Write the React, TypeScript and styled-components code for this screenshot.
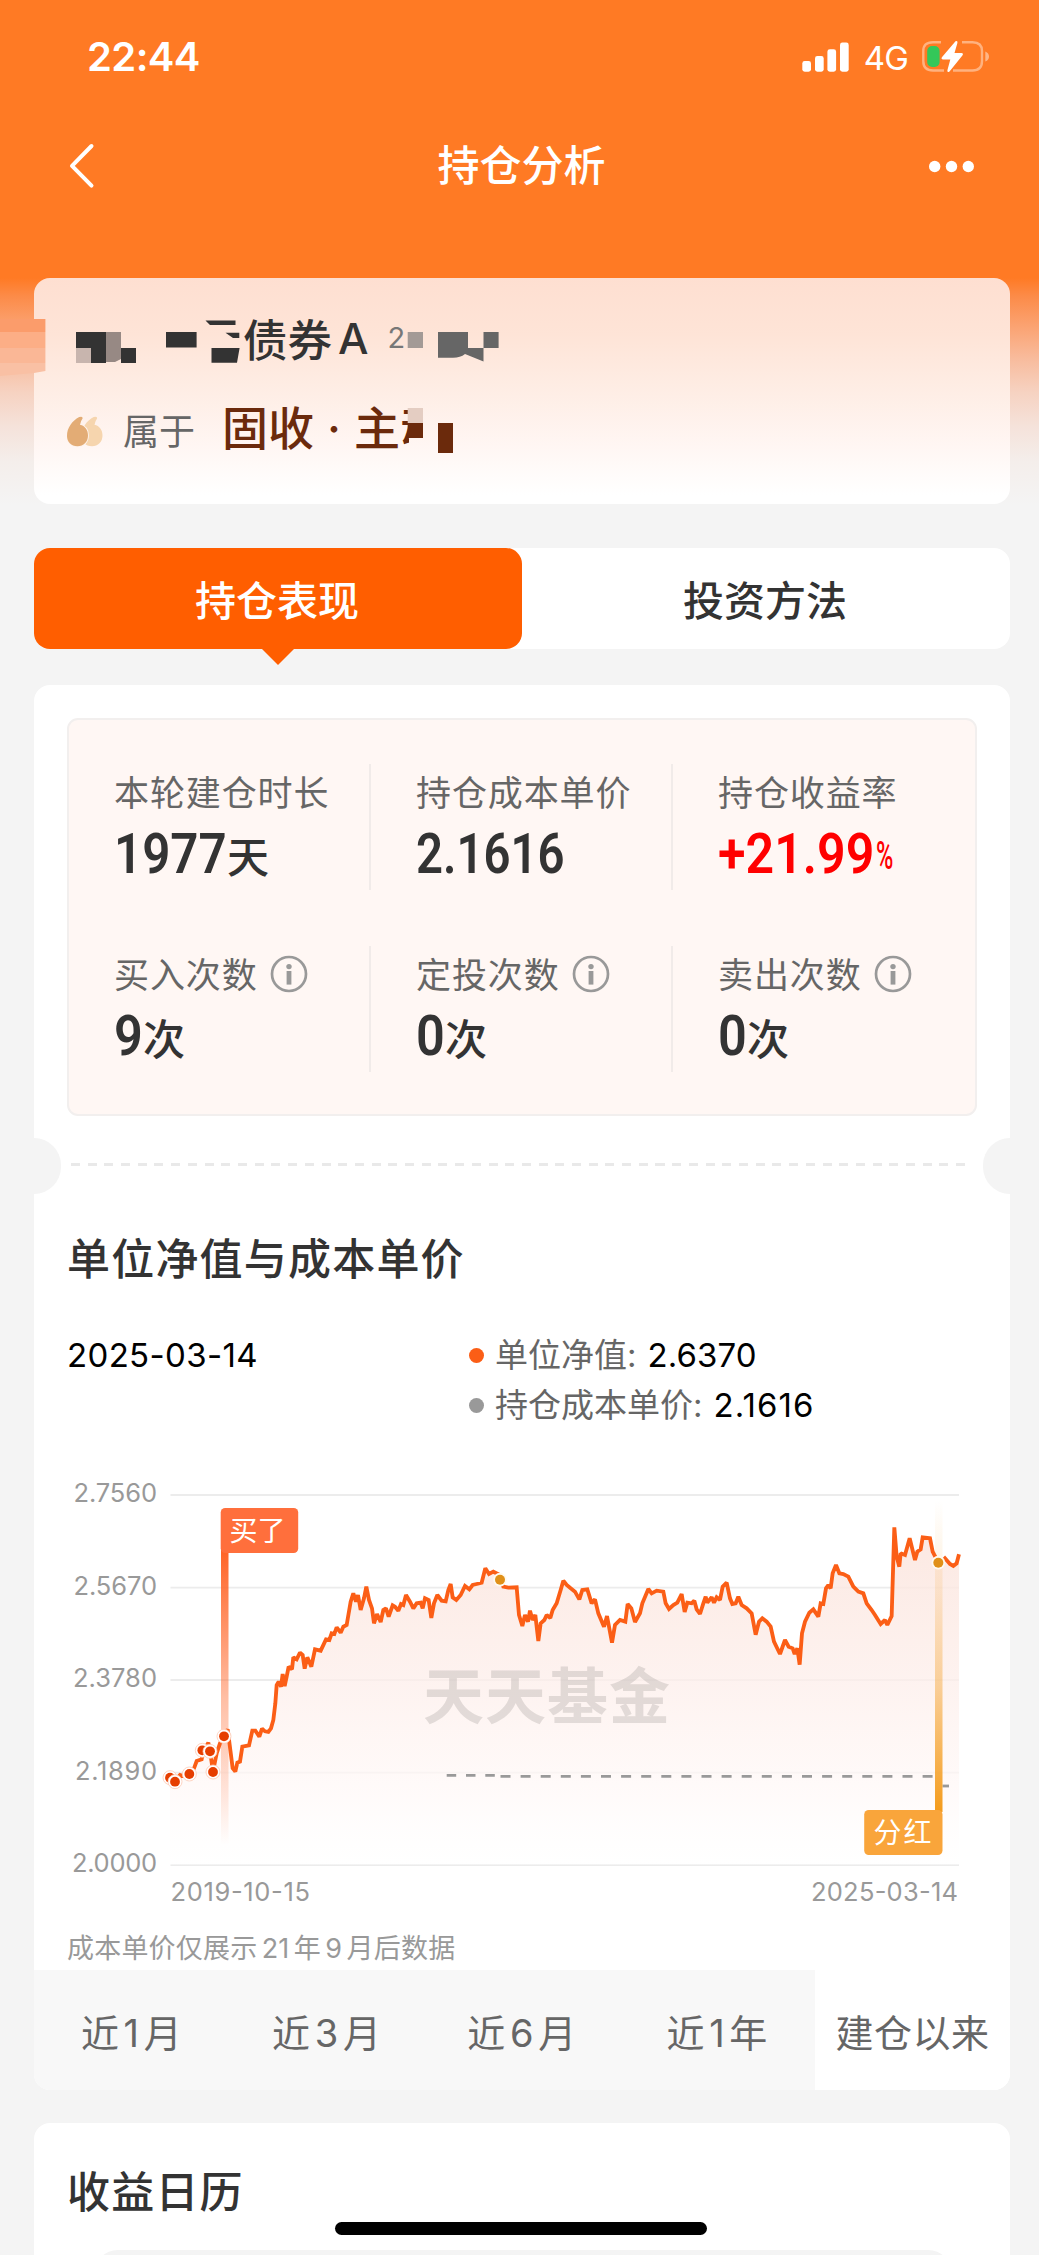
import React from "react";
import styled, { createGlobalStyle } from "styled-components";

const cjk = `"Noto Sans CJK SC", sans-serif`;
const latin = `Inter, "Noto Sans CJK SC", sans-serif`;

const GlobalStyle = createGlobalStyle`
  * { box-sizing: border-box; }
  html, body { margin: 0; padding: 0; background: #fff; }
`;

const Page = styled.div`
  position: relative;
  width: 1039px;
  height: 2255px;
  overflow: hidden;
  display: flex;
  flex-direction: column;
  font-family: ${cjk};
  color: #333;
  background: linear-gradient(
      180deg,
      #ff7a24 0,
      #ff7a24 278px,
      #fc8b48 296px,
      #fba474 328px,
      #f8bb9c 358px,
      #f6d2c1 392px,
      #f5e2da 426px,
      #f4eeeb 462px,
      #f4f4f4 505px
    )
    #f4f4f4;
`;

const StatusBar = styled.div`
  flex: none;
  height: 114px;
  padding: 0 50px 0 87px;
  display: flex;
  align-items: center;
  justify-content: space-between;
  color: #fff;
  font-family: ${latin};
`;
const Clock = styled.span`
  font-size: 40px;
  font-weight: 600;
  line-height: 50px;
  letter-spacing: -0.6px;
`;
const StatusIcons = styled.div`
  display: flex;
  align-items: center;
`;
const Network = styled.span`
  margin: 2px 14px 0 15px;
  font-size: 33px;
  letter-spacing: -0.8px;
  line-height: 40px;
`;

const NavBar = styled.div`
  flex: none;
  height: 103px;
  padding: 0 65px 0 69px;
  display: grid;
  grid-template-columns: 100px 1fr 100px;
  align-items: center;
  color: #fff;
`;
const NavTitle = styled.h1`
  margin: 0 0 6px;
  text-align: center;
  font-size: 42px;
  line-height: 60px;
  font-weight: 500;
`;
const NavEnd = styled.div`
  display: flex;
  justify-content: flex-end;
`;

const FundCard = styled.section`
  position: relative;
  flex: none;
  height: 226px;
  margin: 61px 29px 0 34px;
  padding: 24px 0 0 33px;
  border-radius: 16px;
  background: linear-gradient(180deg, #fedfd1 0%, #fee4d7 25%, #feeee6 52%, #fff6f3 74%, #fff 96%);
`;
const FundName = styled.div`
  height: 70px;
  padding-left: 176px;
  display: flex;
  align-items: center;
  font-size: 44.5px;
  font-weight: 500;
`;
const ShareClass = styled.span`
  margin: 1px 0 0 6px;
  font-size: 43px;
  font-family: ${latin};
  font-weight: 500;
`;
const FundCode = styled.span`
  margin: 0 0 0 19px;
  font-size: 29px;
  font-weight: 400;
  color: #777;
  font-family: ${latin};
`;
const FundKind = styled.div`
  height: 72px;
  margin-top: 19px;
  display: flex;
  align-items: center;
`;
const QuoteMark = styled.svg`
  margin-top: 9px;
`;
const Belongs = styled.span`
  margin: 4px 0 0 19px;
  font-size: 36px;
  color: #666;
`;
const Category = styled.span`
  margin: 0 0 4px 27px;
  width: 187px;
  overflow: hidden;
  white-space: nowrap;
  font-size: 46px;
  font-weight: 500;
  color: #6b2a0c;
`;
const Dot = styled.span`
  display: inline-block;
  width: 40px;
  text-align: center;
  font-family: ${latin};
`;
const Mosaic = styled.svg`
  position: absolute;
  left: -34px;
  top: 0;
  pointer-events: none;
`;

const ModeTabs = styled.div`
  flex: none;
  display: flex;
  height: 101px;
  margin: 44px 29px 0 34px;
  border-radius: 16px;
  background: #fff;
`;
const ModeTab = styled.div<{ $active?: boolean }>`
  position: relative;
  flex: 1;
  display: flex;
  align-items: center;
  justify-content: center;
  padding: 0 2px 1px 0;
  border-radius: 16px;
  font-size: 41px;
  font-weight: 500;
  color: ${(p) => (p.$active ? "#fff" : "#333")};
  background: ${(p) => (p.$active ? "#ff5e00" : "transparent")};
  &::after {
    content: "";
    display: ${(p) => (p.$active ? "block" : "none")};
    position: absolute;
    left: 227px;
    top: 100px;
    border: 17px solid transparent;
    border-bottom: 0;
    border-top-color: #ff5e00;
  }
`;

const Panel = styled.section`
  flex: none;
  margin: 36px 29px 0 34px;
  border-radius: 16px;
  background: #fff;
  overflow: hidden;
`;
const StatsBox = styled.div`
  margin: 33px 33px 0 33px;
  height: 398px;
  padding: 44px 0;
  display: grid;
  grid-template-columns: 302px 302px 1fr;
  grid-template-rows: 126px 126px;
  row-gap: 56px;
  border: 2px solid #f2efee;
  border-radius: 11px;
  background: #fff7f4;
`;
const Stat = styled.div`
  padding-left: 45px;
  border-right: 2px solid #f1ebe9;
  &:nth-child(3n) {
    border-right: 0;
  }
`;
const StatLabel = styled.div`
  height: 56px;
  padding-bottom: 4px;
  display: flex;
  align-items: center;
  gap: 12px;
  font-size: 35px;
  letter-spacing: 0.9px;
  color: #666;
  white-space: nowrap;
  svg {
    margin-top: 4px;
  }
`;
const StatValue = styled.div<{ $up?: boolean }>`
  height: 66px;
  display: flex;
  align-items: baseline;
  line-height: 68px;
  color: ${(p) => (p.$up ? "#ff0000" : "#333")};
`;
const Digits = styled.span<{ $w: number; $squeeze: number }>`
  width: ${(p) => p.$w}px;
  font-family: Roboto, sans-serif;
  font-size: 56px;
  font-weight: 600;
  white-space: nowrap;
  transform: scaleX(${(p) => p.$squeeze});
  transform-origin: 0 50%;
`;
const Unit = styled.span`
  font-size: 42px;
  font-weight: 500;
`;
const Percent = styled.span`
  font-family: Roboto, sans-serif;
  font-size: 38px;
  font-weight: 500;
  transform: scaleX(0.62);
  transform-origin: 0 50%;
  position: relative;
  top: -4px;
`;

const TearLine = styled.div`
  height: 56px;
  margin-top: 22px;
  display: flex;
  align-items: center;
  justify-content: space-between;
`;
const Notch = styled.i<{ $side: "left" | "right" }>`
  width: 27px;
  height: 56px;
  background: #f4f4f4;
  border-radius: ${(p) => (p.$side === "left" ? "0 28px 28px 0" : "28px 0 0 28px")};
`;
const Dashes = styled.i`
  width: 901px;
  height: 3px;
  margin: 0 0 3px -1px;
  background: repeating-linear-gradient(90deg, #e9e9e9 0 9px, transparent 9px 16.7px);
`;

const Heading = styled.h2`
  margin: 32px 0 0 33px;
  font-size: 43px;
  line-height: 60px;
  font-weight: 500;
  letter-spacing: 1.2px;
  color: #333;
`;
const Readout = styled.div`
  display: flex;
  margin: 44px 0 0 33px;
  font-family: ${latin};
  font-size: 33px;
  line-height: 50px;
  color: #000;
`;
const ReadoutDate = styled.div`
  width: 402px;
  letter-spacing: 0.35px;
`;
const Legend = styled.div`
  display: flex;
  align-items: center;
  height: 50px;
  color: #666;
`;
const LegendDot = styled.i<{ $color: string }>`
  width: 15px;
  height: 15px;
  margin-right: 11px;
  border-radius: 50%;
  background: ${(p) => p.$color};
`;
const LegendValue = styled.b<{ $track: number }>`
  margin-left: 11px;
  font-weight: 400;
  letter-spacing: ${(p) => p.$track}px;
  color: #000;
`;
const Chart = styled.svg`
  display: block;
  margin-top: 30px;
  font-family: ${latin};
`;
const Footnote = styled.p`
  margin: 17px 0 0 33px;
  font-size: 27px;
  line-height: 43px;
  letter-spacing: 0.2px;
  word-spacing: -3.5px;
  color: #999;
  font-family: ${latin};
`;
const Ranges = styled.div`
  display: grid;
  grid-template-columns: repeat(5, 1fr);
  height: 120px;
`;
const Range = styled.div<{ $active?: boolean }>`
  display: flex;
  align-items: center;
  justify-content: center;
  padding-top: 1px;
  font-family: ${latin};
  font-size: 38px;
  letter-spacing: 0.5px;
  word-spacing: -7px;
  white-space: nowrap;
  color: #666;
  background: ${(p) => (p.$active ? "#fff" : "#f8f8f8")};
`;

const CalendarCard = styled.section`
  flex: none;
  height: 200px;
  margin: 33px 29px 0 34px;
  padding-top: 4px;
  border-radius: 16px;
  background: #fff;
`;
const CalendarBox = styled.div`
  height: 80px;
  margin: 31px 58px 0 60px;
  border-radius: 24px;
  background: #f4f4f4;
`;
const HomeBar = styled.i`
  position: absolute;
  left: 335px;
  top: 2222px;
  width: 372px;
  height: 13px;
  border-radius: 7px;
  background: #000;
`;

// Net value curve, [x, y] in thirds of a pixel.
const curve: [number, number][] = [
  [360, 955], [372, 965], [390, 945], [400, 948], [418, 942], [432, 925], [440, 903], [455, 898], [460, 872], [475, 848],
  [480, 872], [489, 935], [500, 880], [510, 850], [522, 828], [533, 808], [541, 870], [548, 925], [556, 935], [562, 908],
  [570, 905], [577, 860], [597, 856], [607, 812], [616, 812], [628, 830], [636, 806], [645, 814], [655, 816], [663, 805],
  [670, 780], [676, 730], [680, 675], [686, 665], [693, 680], [698, 642], [704, 678], [710, 650], [716, 620], [726, 628],
  [730, 592], [740, 598], [750, 578], [758, 585], [764, 626], [772, 592], [784, 620], [795, 568], [812, 572], [828, 538],
  [838, 540], [845, 520], [853, 522], [860, 502], [872, 518], [880, 500], [890, 495], [902, 425], [910, 400], [918, 425],
  [924, 405], [932, 450], [942, 415], [949, 380], [957, 420], [966, 445], [972, 490], [981, 462], [992, 486], [1000, 450],
  [1008, 445], [1016, 470], [1028, 436], [1035, 440], [1045, 452], [1053, 432], [1060, 435], [1068, 405], [1080, 425],
  [1090, 445], [1100, 430], [1112, 428], [1118, 445], [1125, 415], [1136, 420], [1144, 474], [1152, 430], [1162, 405],
  [1175, 422], [1187, 424], [1195, 390], [1202, 372], [1208, 412], [1219, 420], [1232, 405], [1245, 378], [1258, 388],
  [1268, 375], [1280, 372], [1295, 368], [1306, 325], [1317, 342], [1330, 335], [1350, 345], [1360, 380], [1375, 383],
  [1400, 382], [1407, 465], [1417, 498], [1425, 465], [1434, 485], [1440, 452], [1448, 480], [1456, 465], [1465, 543],
  [1472, 490], [1483, 480], [1490, 465], [1501, 474], [1508, 450], [1520, 430], [1532, 390], [1540, 362], [1550, 375],
  [1562, 385], [1575, 395], [1588, 418], [1597, 390], [1612, 388], [1625, 430], [1635, 418], [1645, 460], [1662, 500],
  [1671, 468], [1686, 548], [1695, 495], [1710, 480], [1726, 485], [1733, 432], [1744, 445], [1755, 486], [1770, 460],
  [1777, 430], [1795, 387], [1805, 400], [1820, 392], [1840, 395], [1847, 430], [1857, 447], [1870, 435], [1882, 428],
  [1895, 402], [1904, 456], [1912, 428], [1925, 430], [1933, 422], [1940, 448], [1950, 462], [1960, 430], [1967, 410],
  [1972, 428], [1985, 412], [1992, 428], [2000, 412], [2010, 420], [2018, 380], [2030, 368], [2040, 415], [2047, 432],
  [2057, 430], [2065, 410], [2075, 435], [2090, 445], [2105, 460], [2117, 524], [2127, 485], [2137, 475], [2150, 485],
  [2162, 500], [2172, 545], [2190, 582], [2205, 540], [2216, 560], [2228, 565], [2234, 582], [2242, 565], [2249, 614],
  [2256, 520], [2265, 485], [2278, 458], [2290, 448], [2305, 470], [2312, 430], [2320, 432], [2328, 385], [2335, 375],
  [2342, 385], [2348, 340], [2358, 315], [2368, 340], [2380, 342], [2395, 350], [2410, 380], [2425, 395], [2440, 400],
  [2450, 430], [2465, 450], [2475, 465], [2492, 492], [2505, 480], [2512, 495], [2525, 468], [2533, 202], [2540, 290],
  [2548, 320], [2552, 280], [2565, 285], [2579, 235], [2595, 300], [2602, 275], [2612, 268], [2618, 232], [2640, 235],
  [2648, 275], [2665, 308], [2675, 305], [2685, 295], [2700, 312], [2710, 318], [2720, 310], [2727, 283],
];
const line = curve.map(([x, y]) => `${x},${y}`).join(" ");

const yTicks: [string, number, number][] = [
  ["2.7560", 35, 73.5],
  ["2.5670", 127.7, 73.5],
  ["2.3780", 220, 73],
  ["2.1890", 312.7, 75],
  ["2.0000", 405, 72],
];
const buys = [[360, 953], [375, 965], [418, 942], [489, 936], [457, 871], [480, 874], [522, 829]];
const bonuses = [[1350, 359], [2665, 308]];

function NavChart() {
  return (
    <Chart width="976" height="450" viewBox="34 0 976 450">
      <defs>
        <linearGradient id="area" gradientUnits="userSpaceOnUse" x1="0" y1="200" x2="0" y2="1215">
          <stop offset="0" stopColor="#fbe4dc" stopOpacity="0.85" />
          <stop offset="0.45" stopColor="#fdeeea" stopOpacity="0.75" />
          <stop offset="0.8" stopColor="#fff9f8" stopOpacity="0.7" />
          <stop offset="1" stopColor="#fff" stopOpacity="0.4" />
        </linearGradient>
        <linearGradient id="buyPole" x1="0" y1="0" x2="0" y2="1">
          <stop offset="0" stopColor="#ff6426" />
          <stop offset="0.5" stopColor="#ff6426" stopOpacity="0.42" />
          <stop offset="1" stopColor="#ff6426" stopOpacity="0" />
        </linearGradient>
        <linearGradient id="bonusPole" x1="0" y1="0" x2="0" y2="1">
          <stop offset="0" stopColor="#f49b1b" stopOpacity="0" />
          <stop offset="0.3" stopColor="#f49b1b" stopOpacity="0.16" />
          <stop offset="0.6" stopColor="#f49b1b" stopOpacity="0.42" />
          <stop offset="1" stopColor="#f49b1b" />
        </linearGradient>
      </defs>
      {yTicks.map(([label, y, x]) => (
        <g key={label}>
          <line x1="170.5" x2="959" y1={y} y2={y} stroke="#ececec" strokeWidth="1.8" />
          <text x={x} y={y + 7.2} fontSize="25.5" fill="#999" textLength={157 - x} lengthAdjust="spacing">
            {label}
          </text>
        </g>
      ))}
      <g transform="translate(50 0) scale(0.33333)">
        <polygon points={`360,1215 ${line} 2727,1215`} fill="url(#area)" />
        <polyline points={line} fill="none" stroke="#fb5e16" strokeWidth="11.5" strokeLinejoin="miter" strokeMiterlimit="1.6" />
      </g>
      <text x="423" y="258.5" fontFamily={`"Noto Sans CJK SC", sans-serif`} fontWeight="700" fontSize="61" fill="#8c8480" fillOpacity="0.24" textLength="247">
        天天基金
      </text>
      <path d="M446.7 315.3H500" stroke="#999" strokeWidth="2.8" strokeDasharray="9.5 9.8" />
      <path d="M500.5 316.4H934" stroke="#999" strokeWidth="2.8" strokeDasharray="10 10.1" />
      <path d="M942.5 326H949" stroke="#999" strokeWidth="2.8" />
      <rect x="221" y="90" width="7.5" height="295" fill="url(#buyPole)" />
      <rect x="220.7" y="48" width="77.5" height="45" rx="4.5" fill="#ff6f3c" />
      <text x="229.5" y="81" fontSize="28" fill="#fff" textLength="56">买了</text>
      <rect x="935" y="40" width="7.5" height="312" fill="url(#bonusPole)" />
      <rect x="864.2" y="350" width="78.3" height="45" rx="4.5" fill="#f9a53b" />
      <text x="873.5" y="383" fontSize="28" fill="#fff" textLength="58">分红</text>
      {buys.map(([x, y]) => (
        <g key={x} transform={`translate(${50 + x / 3} ${y / 3})`}>
          <circle r="7" fill="#fff" stroke="#fdc9b4" strokeWidth="0.8" />
          <circle r="4.9" fill="#e63e00" />
        </g>
      ))}
      {bonuses.map(([x, y]) => (
        <g key={x} transform={`translate(${50 + x / 3} ${y / 3})`}>
          <circle r="6.8" fill="#fffaf0" />
          <circle r="5" fill="#e09018" />
        </g>
      ))}
      <text x="170.5" y="440.5" fontSize="25.5" fill="#999" textLength="139.500">2019-10-15</text>
      <text x="811" y="440.5" fontSize="25.5" fill="#999" textLength="147">2025-03-14</text>
    </Chart>
  );
}

function InfoIcon() {
  return (
    <svg width="38" height="38" viewBox="0 0 38 38">
      <circle cx="19" cy="19" r="17" fill="none" stroke="#999" strokeWidth="2.7" />
      <circle cx="19" cy="11.6" r="2.7" fill="#999" />
      <path d="M19 16v13.6" stroke="#999" strokeWidth="4.8" />
    </svg>
  );
}

function RedactionBlocks() {
  return (
    <Mosaic width="540" height="226" viewBox="0 278 540 226">
      <path d="M0 319H45.4V332H0z" fill="#fb9c6b" />
      <path d="M0 332H45.4V348H0z" fill="#fcae86" />
      <path d="M0 348H45.4V363H0z" fill="#fab796" />
      <path d="M0 363H45.4V371L34 373L0 376z" fill="#f9c0a4" />
      <path d="M76 332H106V363H91V348H76zM121 348H136V363H121z" fill="#333" />
      <path d="M76 348H91V363H76z" fill="#c8b5ae" />
      <path d="M106 332H121V359L115 362H106z" fill="#978984" />
      <path d="M166 332H196.6V347.5H166z" fill="#333" />
      <path d="M205.5 320.5H235.5V325H210zM225.5 332.7H239.3V338H233zM211.5 348H239.6L237 362.7H211.5z" fill="#333" />
      <path d="M407.7 332H423V348H407.7z" fill="#a39a96" />
      <path d="M438 332H468V348H483.5V361.5L465 354Q460 358 452 357.7H438zM483.5 332H498.6V348H483.5z" fill="#666" />
      <path d="M407.7 408H423V423H407.7z" fill="#e4cdc2" />
      <path d="M407.7 423H423V438H407.7zM438 423H453V453H438z" fill="#6b2a0c" />
    </Mosaic>
  );
}

const drop = "M12.2 1.1Q16 0 15.6 2.4Q13.5 5 13 8.8C18 9.8 21 14 21 19.5C21 26 16.5 30.300 10.5 30.300C4 30.300 0 25.500 0 20C0 12 5 5 12.200 1.100z";

const stats = [
  { label: "本轮建仓时长", value: "1977", unit: "天", w: 113, squeeze: 0.88 },
  { label: "持仓成本单价", value: "2.1616", w: 150, squeeze: 0.845 },
  { label: "持仓收益率", value: "+21.99", percent: true, w: 158, squeeze: 0.895 },
  { label: "买入次数", value: "9", unit: "次", info: true, w: 29, squeeze: 0.9 },
  { label: "定投次数", value: "0", unit: "次", info: true, w: 29, squeeze: 0.9 },
  { label: "卖出次数", value: "0", unit: "次", info: true, w: 29, squeeze: 0.9 },
];
const ranges = ["近 1 月", "近 3 月", "近 6 月", "近 1 年", "建仓以来"];

export default function App() {
  return (
    <>
      <GlobalStyle />
      <Page>
        <StatusBar>
          <Clock>22:44</Clock>
          <StatusIcons>
            <svg width="47" height="30" viewBox="0 0 47 30" fill="#fff">
              <rect x="0.3" y="19" width="8.7" height="10.7" rx="2.4" />
              <rect x="13" y="14" width="8.7" height="15.7" rx="2.4" />
              <rect x="25.4" y="7.3" width="8.7" height="22.4" rx="2.4" />
              <rect x="38" y="0.5" width="8.7" height="29.2" rx="2.4" />
            </svg>
            <Network>4G</Network>
            <svg width="67" height="34" viewBox="0 0 67 34">
              <path d="M19 2.2H11Q1.3 2.2 1.3 11V21Q1.3 30.5 11 30.5H22M40 2.2H50.5Q60 2.2 60 11V21Q60 30.5 50.5 30.5H31" fill="none" stroke="#fff" strokeOpacity="0.42" strokeWidth="2.4" />
              <path d="M63.3 11.5Q67 13 67 16.5T63.3 21.5z" fill="#fff" fillOpacity="0.45" />
              <rect x="5.2" y="6" width="12.4" height="21" rx="5" fill="#34c759" />
              <path d="M33.5 1.2Q36 0.4 35.4 3L32.5 13H39.5Q42 13.5 40.2 15.7L27.5 31.5Q25 33 25.4 30.2L28.3 19.5H20.8Q18.5 19 20.3 16.8z" fill="#fff" />
            </svg>
          </StatusIcons>
        </StatusBar>
        <NavBar>
          <svg width="26" height="46" viewBox="0 0 26 46" fill="none" stroke="#fff" strokeWidth="4" strokeLinecap="round" strokeLinejoin="round">
            <path d="M22.5 3L3 22.800L22.5 42.600" />
          </svg>
          <NavTitle>持仓分析</NavTitle>
          <NavEnd>
            <svg width="46" height="14" viewBox="0 0 46 14" fill="#fff">
              <circle cx="6.7" cy="7.5" r="5.7" />
              <circle cx="23.5" cy="7.5" r="5.7" />
              <circle cx="40.3" cy="7.5" r="5.7" />
            </svg>
          </NavEnd>
        </NavBar>

        <FundCard>
          <FundName>
            债券<ShareClass>A</ShareClass>
            <FundCode>2</FundCode>
          </FundName>
          <FundKind>
            <QuoteMark width="37" height="32" viewBox="0 0 37 32">
              <path d={drop} transform="translate(14.500 0)" fill="#f6d5ae" />
              <path d={drop} fill="#e3ac75" stroke="#fef3ec" strokeWidth="1.800" paintOrder="stroke" />
            </QuoteMark>
            <Belongs>属于</Belongs>
            <Category>
              固收<Dot>·</Dot>主动
            </Category>
          </FundKind>
          <RedactionBlocks />
        </FundCard>

        <ModeTabs>
          <ModeTab $active>持仓表现</ModeTab>
          <ModeTab>投资方法</ModeTab>
        </ModeTabs>

        <Panel>
          <StatsBox>
            {stats.map((s) => (
              <Stat key={s.label}>
                <StatLabel>
                  {s.label}
                  {s.info && <InfoIcon />}
                </StatLabel>
                <StatValue $up={s.percent}>
                  <Digits $w={s.w} $squeeze={s.squeeze}>{s.value}</Digits>
                  {s.unit && <Unit>{s.unit}</Unit>}
                  {s.percent && <Percent>%</Percent>}
                </StatValue>
              </Stat>
            ))}
          </StatsBox>
          <TearLine>
            <Notch $side="left" />
            <Dashes />
            <Notch $side="right" />
          </TearLine>
          <Heading>单位净值与成本单价</Heading>
          <Readout>
            <ReadoutDate>2025-03-14</ReadoutDate>
            <div>
              <Legend>
                <LegendDot $color="#fb5e16" />
                单位净值:<LegendValue $track={0.1}>2.6370</LegendValue>
              </Legend>
              <Legend>
                <LegendDot $color="#999" />
                持仓成本单价:<LegendValue $track={1.1}>2.1616</LegendValue>
              </Legend>
            </div>
          </Readout>
          <NavChart />
          <Footnote>成本单价仅展示 21 年 9 月后数据</Footnote>
          <Ranges>
            {ranges.map((r, i) => (
              <Range key={r} $active={i === 4}>
                {r}
              </Range>
            ))}
          </Ranges>
        </Panel>

        <CalendarCard>
          <Heading>收益日历</Heading>
          <CalendarBox />
        </CalendarCard>
        <HomeBar />
      </Page>
    </>
  );
}
